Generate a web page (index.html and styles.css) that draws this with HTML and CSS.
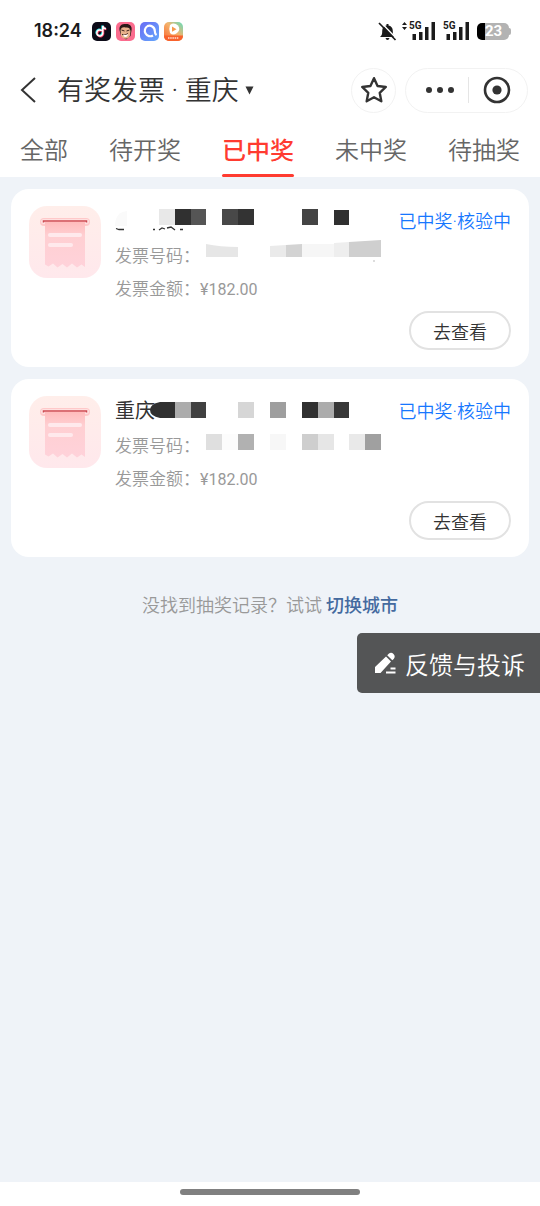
FILE: index.html
```html
<!DOCTYPE html>
<html lang="zh-CN">
<head>
<meta charset="utf-8">
<meta name="viewport" content="width=device-width, initial-scale=1">
<title>有奖发票</title>
<link rel="stylesheet" href="styles.css">
</head>
<body>
<svg class="defs" aria-hidden="true">
  <defs>
    <linearGradient id="g-tile" x1="0" y1="0" x2="0" y2="1"><stop offset="0" stop-color="#ffeeea"/><stop offset="1" stop-color="#ffe8ec"/></linearGradient>
    <linearGradient id="g-paper" x1="0" y1="0" x2="0" y2="1"><stop offset="0" stop-color="#ffbcbc"/><stop offset=".3" stop-color="#ffcfd2"/><stop offset="1" stop-color="#ffd2da"/></linearGradient>
    <linearGradient id="g-blue" x1="0" y1="0" x2="1" y2="1"><stop offset="0" stop-color="#6a6cf5"/><stop offset="1" stop-color="#64a8fb"/></linearGradient>
    <linearGradient id="g-play" x1="1" y1="0" x2="0" y2="1"><stop offset="0" stop-color="#5fe0c0"/><stop offset=".45" stop-color="#f5b26b"/><stop offset="1" stop-color="#f8652f"/></linearGradient>
  </defs>
  <symbol id="ticket" viewBox="0 0 72 72">
    <rect width="72" height="72" rx="18" fill="url(#g-tile)"/>
    <rect x="11" y="12" width="50" height="8" rx="4" fill="#ffc9c9"/>
    <rect x="12" y="13" width="48" height="5" rx="2.500" fill="#ffe0e0"/>
    <path d="M16 16h40v45l-3.500-2.500-4.500 3-5-4-5 4-4.500-3.500-5 3.500-4.500-4-4.500 3-3.500-2z" fill="url(#g-paper)"/>
    <path d="M14.500 16.500V15h43v1.500" fill="none" stroke="#cf4b52" stroke-width="1.500"/>
    <rect x="19" y="27" width="34" height="4" rx="2" fill="#ffe9ec"/>
    <rect x="19" y="37" width="25" height="4" rx="2" fill="#ffe9ec"/>
  </symbol>
  <symbol id="signal" viewBox="0 0 28 20">
    <path d="M3.500 13H7v6H3.500zM10 11h3.500v8H10zM16 6h3.500v13H16zM22.500 1H26v18h-3.500z" fill="#1b1b1b"/>
  </symbol>
</svg>

<header class="top">
  <div class="status">
    <span class="clock">18:24</span>
    <div class="apps">
      <svg viewBox="0 0 19 19"><rect width="19" height="19" rx="5" fill="#0c0b18"/><g fill="none" stroke-width="2"><path d="M9.300 8.200a3 3 0 1 0 1 2.800V3.500c.5 1.800 1.700 2.700 3.300 2.800" stroke="#2fe6e2"/><path d="M10.300 9.200a3 3 0 1 0 1 2.800V4.500c.5 1.800 1.500 2.700 3.100 2.800" stroke="#f0325a"/><path d="M9.800 8.700a3 3 0 1 0 1 2.800V4c.5 1.800 1.500 2.700 3.100 2.800" stroke="#fff" stroke-width="1.500"/></g></svg>
      <svg viewBox="0 0 19 19"><rect width="19" height="19" rx="5" fill="#fb6c8e"/><path d="M3.500 8C3 3 6 2 9.500 2c4-.5 7 2 6 6.500L14.500 14 10 17.500 5 14z" fill="#2b1a17"/><path d="M4.500 8c1-3 3-3 5-2.500 3-.5 4.500.5 5 3.500l-.5 4.500c-1 4-7 4.500-9 .5z" fill="#e9b18c"/><path d="M5.500 8l3 1M10.500 9l3-1M6 12.500q3 1.500 6-1" stroke="#40221c" fill="none"/><path d="M7 12.500q2.500 1 5-.5-.5 3-2.500 3T7 12.500z" fill="#fff"/></svg>
      <svg viewBox="0 0 19 19"><rect width="19" height="19" rx="5" fill="url(#g-blue)"/><path d="M7 4.300A5.300 5.300 0 0 1 14.800 9q0 3 1.700 4.200M13 13.500A5.300 5.300 0 1 1 7.500 4.100" fill="none" stroke="#fff" stroke-width="2.200"/></svg>
      <svg viewBox="0 0 19 19"><rect width="19" height="19" rx="5" fill="url(#g-play)"/><path d="M0 13.500h19V14a5 5 0 0 1-5 5H5a5 5 0 0 1-5-5z" fill="#f8622c"/><path d="M6 3q4-3 8 .5 3 4-1 7.500-4 3-7 0-1.500-4 0-8z" fill="#fff"/><path d="M8 4.500l4.500 2.700L8 9.800z" fill="#f79a4c"/><path d="M4 16h11" stroke="#ffe0d2" stroke-width="1.500" stroke-dasharray="1.500 .7"/></svg>
    </div>
    <div class="indicators">
      <svg class="bell" viewBox="0 0 19 19"><path d="M2 15c2-2 2.200-3 2.200-6 0-3.500 1.800-5 4.300-5.500V2h2v1.500c2.500.5 4.300 2 4.300 5.500 0 3 .2 4 2.200 6zM7.500 16h4q-.5 2-2 2t-2-2z" fill="#1b1b1b"/><path d="M2.500 0l16 16.500" stroke="#fff" stroke-width="1.500"/><path d="M1 1l16.500 17" stroke="#1b1b1b" stroke-width="1.700"/></svg>
      <span class="cell"><svg class="updown" viewBox="0 0 5 8"><path d="M0 3l2.500-3L5 3zM0 5l2.500 3L5 5z" fill="#1b1b1b"/></svg><span class="gen">5G</span><svg class="bars"><use href="#signal"/></svg></span>
      <span class="cell"><span class="gen">5G</span><svg class="bars"><use href="#signal"/></svg></span>
      <span class="battery">23</span>
    </div>
  </div>

  <div class="nav">
    <button class="back" aria-label="返回"><svg viewBox="0 0 18 28"><path d="M16 2L3 14l13 12" fill="none" stroke="#333" stroke-width="2"/></svg></button>
    <h1 class="title">有奖发票 · 重庆</h1>
    <button class="drop" aria-label="选择城市"><svg viewBox="0 0 9 9"><path d="M.5.500h8L4.500 8.500z" fill="#333"/></svg></button>
    <button class="star" aria-label="收藏"><svg viewBox="0 0 26 26"><path d="M13 2l3.300 7.300 7.700.9-5.700 5.400 1.500 7.900L13 19.700l-6.800 3.800 1.500-7.900L2 10.200l7.700-.9z" fill="none" stroke="#333" stroke-width="2.200" stroke-linejoin="round"/></svg></button>
    <div class="capsule">
      <button aria-label="更多"><svg class="dots" viewBox="0 0 30 8"><g fill="#333"><circle cx="4" cy="4" r="3"/><circle cx="15" cy="4" r="3"/><circle cx="26" cy="4" r="3"/></g></svg></button>
      <button aria-label="关闭"><svg class="ring" viewBox="0 0 28 28"><circle cx="14" cy="14" r="12" fill="none" stroke="#333" stroke-width="2.600"/><circle cx="14" cy="14" r="4.600" fill="#333"/></svg></button>
    </div>
  </div>

  <nav class="tabs">
    <a href="#all">全部</a>
    <a href="#pending">待开奖</a>
    <a href="#won" class="active" aria-current="page">已中奖</a>
    <a href="#lost">未中奖</a>
    <a href="#draw">待抽奖</a>
  </nav>
</header>

<main class="content">
  <article class="card">
    <div class="body">
      <svg class="tile"><use href="#ticket"/></svg>
      <div class="info">
        <div class="head">
          <svg class="mosaic" viewBox="0 0 266 30" aria-hidden="true">
            <path d="M0 18q1-12 12-13v15H0z" fill="#fafafa"/>
            <path d="M1 22.500l3 1h5M38 23.500h2M44 24l3-2 3 1M52 22l4-1 4 3M65 23.500h3" fill="none" stroke="#333" stroke-width="1.300"/>
            <path d="M44 3h16v16H44z" fill="#e8e8e8"/><path d="M60 3h16v16H60z" fill="#303030"/><path d="M76 3h15v16H76z" fill="#555"/>
            <path d="M107 3h16v16h-16z" fill="#484848"/><path d="M123 3h16v16h-16z" fill="#333"/>
            <path d="M187 3h16v16h-16z" fill="#444"/><path d="M219 4h15v15h-15z" fill="#303030"/>
          </svg>
          <span class="state">已中奖·核验中</span>
        </div>
        <div class="line">发票号码：
          <svg class="mosaic" viewBox="0 0 266 33" aria-hidden="true">
            <path d="M91 5q14 3 32 3v10H91z" fill="#e6e6e6"/>
            <path d="M155 7l16-1v12h-16z" fill="#eaeaea"/><path d="M171 6l16-1v13h-16z" fill="#d3d3d3"/><path d="M187 5h32v13h-32z" fill="#f6f6f6"/><path d="M219 4l15-1v15h-15z" fill="#eee"/><path d="M234 3l32-2v17h-32z" fill="#cfcfcf"/><path d="M258 21h2v2h-2z" fill="#ddd"/>
          </svg>
        </div>
        <div class="line">发票金额：<span class="amount">¥182.00</span></div>
      </div>
    </div>
    <button class="view">去查看</button>
  </article>

  <article class="card">
    <div class="body">
      <svg class="tile"><use href="#ticket"/></svg>
      <div class="info">
        <div class="head">
          <h2 class="name">重庆</h2>
          <svg class="mosaic" viewBox="0 0 266 30" aria-hidden="true">
            <path d="M60 6H45q-10 2-10 8t10 8h15z" fill="#303030"/><path d="M60 6h16v16H60z" fill="#acacac"/><path d="M76 6h15v16H76z" fill="#404040"/>
            <path d="M123 6h16v16h-16z" fill="#d6d6d6"/><path d="M155 6h16v16h-16z" fill="#9e9e9e"/>
            <path d="M187 6h16v16h-16z" fill="#303030"/><path d="M203 6h16v16h-16z" fill="#acacac"/><path d="M219 6h15v16h-15z" fill="#383838"/>
          </svg>
          <span class="state">已中奖·核验中</span>
        </div>
        <div class="line">发票号码：
          <svg class="mosaic" viewBox="0 0 266 33" aria-hidden="true">
            <path d="M91 5h16v16H91z" fill="#dfdfdf"/><path d="M107 5h16v16h-16z" fill="#fcfcfc"/><path d="M123 5h16v16h-16z" fill="#b1b1b1"/>
            <path d="M155 5h16v16h-16z" fill="#f7f7f7"/><path d="M187 5h16v16h-16z" fill="#cecece"/><path d="M203 5h16v16h-16z" fill="#e6e6e6"/>
            <path d="M234 5h16v16h-16z" fill="#e9e9e9"/><path d="M250 5h16v16h-16z" fill="#a0a0a0"/>
          </svg>
        </div>
        <div class="line">发票金额：<span class="amount">¥182.00</span></div>
      </div>
    </div>
    <button class="view">去查看</button>
  </article>

  <p class="hint"><span>没找到抽奖记录？试试</span><a href="#city">切换城市</a></p>

  <button class="feedback">
    <svg viewBox="0 0 22 22"><path d="M1 21v-6L12 4.500l5 5L6.500 21zM13.200 3.300l1.500-1.500q2.500-2 4.800.2t.2 4.900L18.300 8.300z" fill="#fff"/><path d="M12 20.500h9.500M16.500 16.500h5" stroke="#fff" stroke-width="1.800"/></svg>
    反馈与投诉
  </button>
</main>

<footer class="homebar"><span></span></footer>
</body>
</html>
```
FILE: styles.css
```css
* { box-sizing: border-box; }
body {
  margin: 0;
  min-height: 100vh;
  display: flex;
  flex-direction: column;
  background: #fff;
  color: #333;
  font-family: Roboto, "Noto Sans CJK SC", sans-serif;
  font-weight: 350;
}
button {
  padding: 0;
  border: 0;
  background: none;
  color: inherit;
  font: inherit;
  display: flex;
  align-items: center;
  justify-content: center;
}
a { text-decoration: none; color: inherit; }
svg { display: block; flex: none; }
.defs { position: absolute; width: 0; height: 0; }

.status { display: flex; align-items: center; height: 62px; padding: 0 31px 0 34px; }
.clock { font: 600 18px/24px Inter, sans-serif; color: #1b1b1b; }
.apps { display: flex; gap: 5px; margin-left: 10px; }
.apps svg { width: 19px; height: 19px; }
.indicators { display: flex; align-items: center; gap: 6px; margin-left: auto; }
.bell { width: 19px; height: 19px; }
.cell { position: relative; display: block; width: 28px; height: 20px; }
.bell + .cell { margin-left: 6px; }
.bars { width: 28px; height: 20px; }
.gen { position: absolute; left: 0; top: 0; font: 700 10px/10px Roboto, sans-serif; color: #1b1b1b; }
.updown { position: absolute; left: -7px; top: 1px; width: 5px; height: 8px; }
.battery {
  position: relative;
  width: 32px;
  height: 17px;
  padding-left: 8px;
  border-radius: 5px;
  background: linear-gradient(to right, #000 8px, #b3b3b3 8px);
  font: 700 15px/17px Roboto, sans-serif;
  color: #fff;
}
.battery::after { content: ""; position: absolute; left: 100%; top: 5px; width: 2px; height: 7px; border-radius: 0 2px 2px 0; background: #b3b3b3; }

.nav { display: flex; align-items: center; height: 56px; padding: 0 12px 0 19px; }
.back svg { width: 18px; height: 28px; }
.title { margin: 0 0 0 20px; padding-top: 2px; font-size: 27px; line-height: 40px; font-weight: 350; white-space: nowrap; }
.drop { margin-left: 6px; }
.drop svg { width: 9px; height: 9px; }
.star { width: 45px; height: 45px; margin-left: auto; border: 1px solid #f2f2f2; border-radius: 50%; }
.star svg { width: 28px; height: 28px; }
.capsule { display: flex; align-items: center; width: 123px; height: 45px; margin-left: 9px; border: 1px solid #f2f2f2; border-radius: 23px; }
.capsule button { flex: 1; height: 26px; }
.capsule button:first-child { padding-left: 6px; }
.capsule button + button { padding-right: 2px; border-left: 1px solid #e5e5e5; }
.dots { width: 30px; height: 8px; }
.ring { width: 28px; height: 28px; }

.tabs { display: flex; justify-content: space-between; height: 59px; padding: 0 20px; font-size: 24px; line-height: 67px; color: #666; }
.tabs a { position: relative; height: 59px; white-space: nowrap; }
.tabs .active { color: #ff3b30; font-weight: 500; }
.tabs .active::after { content: ""; position: absolute; left: 0; right: 0; bottom: 0; height: 3px; border-radius: 2px; background: #ff3b30; }

.content { flex: 1; display: flex; flex-direction: column; padding-top: 12px; background: #eff3f8; }
.card { margin: 0 11px 12px; padding: 17px 18px; border-radius: 18px; background: #fff; }
.body { display: flex; gap: 14px; }
.tile { width: 72px; height: 72px; }
.info { flex: 1; min-width: 0; }
.head { position: relative; display: flex; height: 30px; margin-bottom: 3px; line-height: 31px; }
.name { margin: 0; font-size: 20px; font-weight: 400; }
.state { margin-left: auto; font-size: 18px; color: #1677ff; white-space: nowrap; }
.line { position: relative; height: 33px; font-size: 17px; line-height: 35px; color: #999; }
.amount { font-size: 16px; font-weight: 400; }
.mosaic { position: absolute; left: 0; top: 0; width: 266px; height: 100%; }
.view { width: 102px; height: 39px; margin: 6px 0 0 auto; border: 2px solid #e2e2e2; border-radius: 20px; font-size: 18px; }

.hint { display: flex; justify-content: center; gap: 4px; margin: 22px 0 12px; font-size: 18px; line-height: 30px; color: #999; }
.hint a { color: #446a9f; font-weight: 500; }

.feedback { align-self: flex-end; gap: 9px; height: 60px; padding: 0 15px 0 17px; border-radius: 5px 0 0 5px; background: #545556; color: #fff; font-size: 24px; }
.feedback svg { width: 22px; height: 22px; }

.homebar { display: flex; justify-content: center; height: 24px; padding-top: 7px; }
.homebar span { width: 180px; height: 6px; border-radius: 3px; background: #808080; }
```
